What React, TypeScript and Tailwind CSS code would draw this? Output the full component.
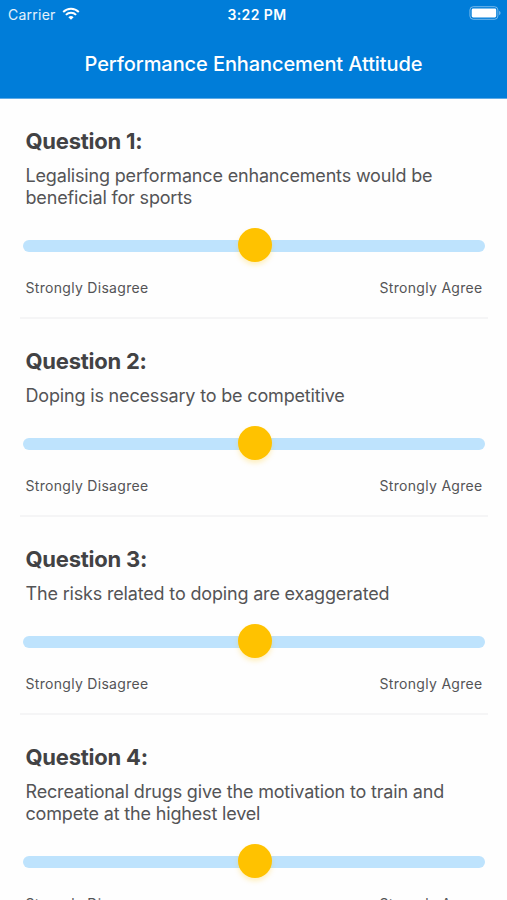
interface Question {
  id: number;
  lines: string[];
  value: number;
}

const QUESTIONS: Question[] = [
  { id: 1, lines: ["Legalising performance enhancements would be", "beneficial for sports"], value: 50 },
  { id: 2, lines: ["Doping is necessary to be competitive"], value: 50 },
  { id: 3, lines: ["The risks related to doping are exaggerated"], value: 50 },
  {
    id: 4,
    lines: ["Recreational drugs give the motivation to train and", "compete at the highest level"],
    value: 50,
  },
];

function WifiIcon() {
  return (
    <svg viewBox="0 0 18 13" className="mb-[2px] h-[13px] w-[18px]" fill="none" stroke="white">
      <path d="M1.2 5a11 11 0 0 1 15.6 0" strokeWidth="1.9" />
      <path d="M3.9 7.9a7.2 7.2 0 0 1 10.2 0" strokeWidth="2" />
      <path d="M9 12.8 6.4 10.2a3.7 3.7 0 0 1 5.2 0Z" fill="white" stroke="none" />
    </svg>
  );
}

function BatteryIcon() {
  return (
    <svg viewBox="0 0 32 14" className="mb-[2px] h-[14px] w-[32px]">
      <rect x="0.9" y="0.7" width="28" height="12.6" rx="3.4" fill="none" stroke="white" strokeOpacity="0.45" />
      <rect x="2.7" y="2.5" width="24.5" height="9" rx="1.4" fill="white" />
      <path d="M30.2 4.8c1.8.7 1.8 3.7 0 4.4Z" fill="white" fillOpacity="0.5" />
    </svg>
  );
}

function Header() {
  return (
    <header className="h-[99px] border-b border-[#5eabe6] bg-[#007dd9] text-white">
      <div className="grid h-7 grid-cols-3 items-center pl-[8px] pr-[6px]">
        <div className="flex items-center gap-[6px]">
          <span className="text-[14px] tracking-[0.25px] text-white/90">Carrier</span>
          <WifiIcon />
        </div>
        <span className="pl-[5px] text-center text-[14px] font-semibold tracking-[0.4px]">3:22 PM</span>
        <div className="flex justify-end">
          <BatteryIcon />
        </div>
      </div>
      <h1 className="mt-[22px] text-center text-[20px] font-medium leading-[28px] tracking-[-0.09px] whitespace-nowrap">
        Performance Enhancement Attitude
      </h1>
    </header>
  );
}

function Slider({ value }: { value: number }) {
  return (
    <div className="relative mt-[19px] ml-[3px] mr-[3px] flex h-[36px] items-center">
      <div className="h-[12px] w-full rounded-full bg-[#bee3fd]" />
      <div
        className="absolute top-0 ml-[0.5px] size-[34px] -translate-x-1/2 rounded-full bg-[#ffc200] shadow-[0_3px_5px_rgba(255,194,0,0.25)]"
        style={{ left: `${value}%` }}
      />
    </div>
  );
}

function QuestionItem({ question }: { question: Question }) {
  return (
    <section className="ml-[20px] mr-[19px] border-b-2 border-[#f5f5f6] pt-[28px] pb-[19px] text-[#545456]">
      <h2 className="ml-[5.5px] text-[22px] font-bold leading-[28px] tracking-[-0.24px] text-[#424244]">
        Question {question.id}:
      </h2>
      <p className="mt-[10px] ml-[5.5px] text-[18px] leading-[22px] tracking-[-0.17px] whitespace-nowrap">
        {question.lines.map((line) => (
          <span key={line} className="block">
            {line}
          </span>
        ))}
      </p>
      <Slider value={question.value} />
      <div className="mt-[14px] flex justify-between pl-[5.5px] pr-[5.5px] text-[14px] leading-[20px] tracking-[0.3px]">
        <span>Strongly Disagree</span>
        <span>Strongly Agree</span>
      </div>
    </section>
  );
}

export default function App() {
  return (
    <div className="h-[900px] w-[507px] overflow-hidden bg-[#fefefe] font-['Inter','Liberation_Sans',sans-serif]">
      <Header />
      <main>
        {QUESTIONS.map((question) => (
          <QuestionItem key={question.id} question={question} />
        ))}
      </main>
    </div>
  );
}
